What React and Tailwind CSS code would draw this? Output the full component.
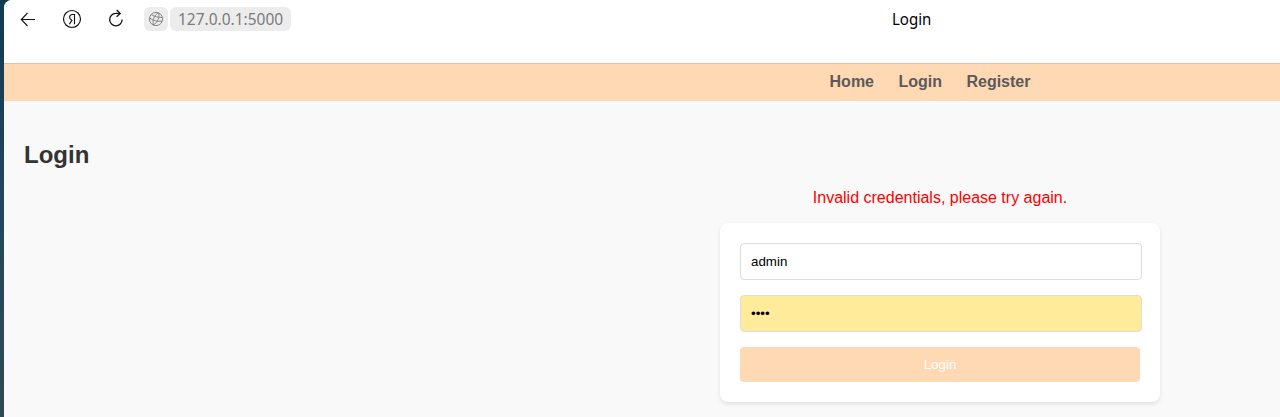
import React from "react";

function BackIcon() {
  return (
    <svg width="20" height="20" viewBox="0 0 20 20" fill="none" stroke="#111" strokeWidth="1.1">
      <path d="M17 10.5H3.5M9.5 4 3.3 10.5 9.5 17" />
    </svg>
  );
}

function YandexIcon() {
  return (
    <svg width="20" height="20" viewBox="0 0 20 20" fill="none" stroke="#111" strokeWidth="1.15">
      <circle cx="10" cy="10" r="8.5" />
      <path d="M12.5 15.2V5.5H10.4C8.6 5.5 7.6 6.7 7.6 8.2C7.6 9.6 8.4 10.3 9.9 11.4L7.3 15.2" />
    </svg>
  );
}

function ReloadIcon() {
  return (
    <svg width="20" height="20" viewBox="0 0 20 20" fill="none" stroke="#111" strokeWidth="1.3">
      <path d="M14 4.4H9.8A6.2 6.2 0 1 0 16.1 10.6M10.6 1 14.2 4.4 10.6 7.8" />
    </svg>
  );
}

function GlobeIcon() {
  return (
    <svg width="16" height="16" viewBox="0 0 16 16" fill="none" stroke="#858585" strokeWidth="1">
      <circle cx="8" cy="8" r="6.6" />
      <path d="M10.6 1.9C6.5 3.5 4 9 5.4 14M10.6 1.9C12 5.5 9.8 11.5 5.4 14M1.5 7C5.2 9.6 9.5 10.6 14 10.3M3.2 3.6C6.5 5.8 10.8 6.6 14.4 6.4" />
    </svg>
  );
}

function BrowserBar() {
  return (
    <header className="flex h-16 items-start border-b border-[#dcc3ab] bg-white pt-[7px] font-['Noto_Sans',sans-serif]">
      <div className="flex h-6 w-[888px] shrink-0 items-center pl-[14px]">
        <div className="flex w-[126px] gap-6">
          <BackIcon />
          <YandexIcon />
          <ReloadIcon />
        </div>
        <span className="flex h-6 w-6 items-center justify-center rounded-md bg-[#ececec]">
          <GlobeIcon />
        </span>
        <span className="ml-[2px] flex h-6 w-[121px] items-center rounded-md bg-[#ececec] pl-2 text-[#7b7b7b]">
          <span className="inline-block origin-left scale-x-[0.938] text-[16.5px] leading-6">127.0.0.1:5000</span>
        </span>
      </div>
      <span className="inline-block origin-left scale-x-[0.91] text-[16.5px] leading-6 text-black">Login</span>
    </header>
  );
}

export default function App() {
  return (
    <div className="h-[417px] overflow-hidden bg-linear-to-b from-[#103b50] via-[#23485c] to-[#344852] pl-1 font-['Liberation_Sans',Arial,sans-serif]">
      <div className="h-full w-[1872px] overflow-hidden rounded-tl-lg bg-[#f9f9f9]">
        <BrowserBar />
        <nav className="flex h-[37px] justify-center gap-[4.45px] bg-[#ffd8b4] pt-[9px] text-base leading-[18px] font-bold text-[#5a5a5a]">
          <a className="mr-5">Home</a>
          <a className="mr-5">Login</a>
          <a className="mr-5">Register</a>
        </nav>
        <main className="px-5 pt-10">
          <h2 className="text-2xl leading-7 font-bold text-[#333]">Login</h2>
          <p className="mt-5 text-center text-base leading-[18px] text-[#f00]">
            Invalid credentials, please try again.
          </p>
          <form className="mx-auto mt-4 h-[179px] w-[440px] rounded-lg bg-white p-5 shadow-[0_2px_4px_rgba(0,0,0,0.1)]">
            <input
              type="text"
              defaultValue="admin"
              className="block h-[37px] w-[402px] rounded border border-[#ddd] px-2.5 text-[13.333px] text-black"
            />
            <input
              type="password"
              defaultValue="1234"
              className="mt-[15px] block h-[37px] w-[402px] rounded border border-[#ddd] bg-[#ffeb99] px-2.5 text-[13.333px] text-black"
            />
            <button
              type="button"
              className="mt-[15px] block h-[35px] w-full rounded bg-[#ffd8b4] text-[13.333px] text-white"
            >
              Login
            </button>
          </form>
        </main>
      </div>
    </div>
  );
}
